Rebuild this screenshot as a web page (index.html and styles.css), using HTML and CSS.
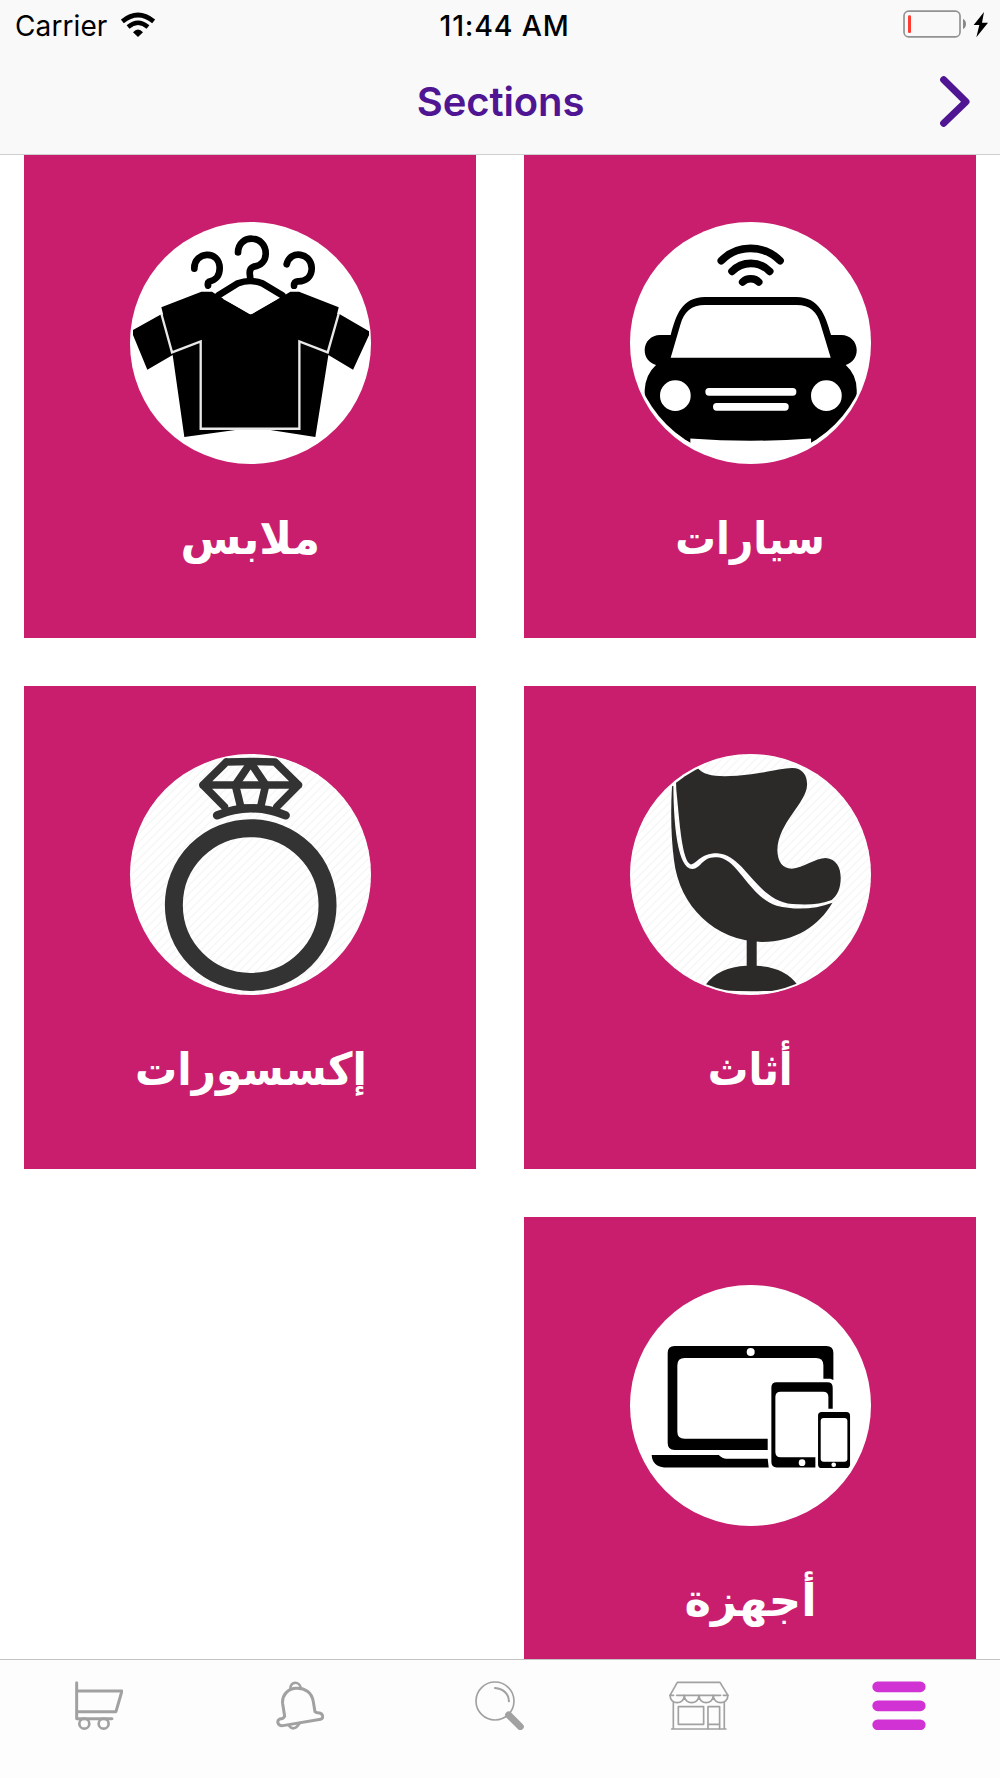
FILE: index.html
```html
<!DOCTYPE html>
<html lang="en">
<head>
    <meta charset="UTF-8">
    <meta name="viewport" content="width=device-width, initial-scale=1.0">
    <title>Sections</title>
    <link rel="stylesheet" href="styles.css">
</head>
<body>
<header class="top-bar">
    <div class="status-bar">
        <div class="status-left">
            <span class="carrier">Carrier</span>
            <svg class="wifi" viewBox="362 34 104 76">
                <path d="M366 62Q413 24 460 62" fill="none" stroke="#000" stroke-width="14"/>
                <path d="M383 79Q413 54 443 79" fill="none" stroke="#000" stroke-width="13"/>
                <path d="M398 95Q413 78 428 95L413 109Z"/>
            </svg>
        </div>
        <span class="time">11:44 AM</span>
        <div class="status-right">
            <svg class="battery" viewBox="1209 30 257 84">
                <rect x="1212" y="33.500" width="168" height="77" rx="14" fill="none" stroke="#929292" stroke-width="5"/>
                <rect x="1224" y="46" width="9" height="53" rx="4" fill="#ff3b30"/>
                <path d="M1389 57Q1398 61 1398 72Q1398 83 1389 87Z" fill="#888"/>
                <path d="M1452 36L1421 75H1438L1429 112L1464 68H1446Z"/>
            </svg>
        </div>
    </div>
    <div class="nav-bar">
        <h1>Sections</h1>
        <a href="#" class="next">
            <svg viewBox="1318 229 90 153"><path d="M1329 240L1396 306L1329 371" fill="none" stroke="#4f1592" stroke-width="21" stroke-linecap="round" stroke-linejoin="round"/></svg>
        </a>
    </div>
</header>

<main>
    <div class="sections" dir="rtl">
        <a href="#" class="card">
            <svg class="card-icon" viewBox="29 37 724 724">
                <clipPath id="car-clip"><circle cx="391" cy="392" r="357"/></clipPath>
                <g fill="none" stroke="#000" stroke-width="23" stroke-linecap="round">
                    <path d="M303 153C350 104 431 104 479 153"/>
                    <path d="M335 185C366 153 417 153 448 185"/>
                    <path d="M367 217C379 204 403 204 415 217"/>
                </g>
                <g clip-path="url(#car-clip)">
                    <path d="M151 376C168 315 183 264 254 262H528C598 264 614 315 632 376H663C689 376 709 396 709 421C709 443 696 460 676 466Q709 495 709 542V720H572V686Q391 700 210 686V720H73V542Q75 495 107 466C86 460 73 443 73 421C73 396 93 376 119 376Z"/>
                    <path d="M151 444H631L601 345C590 306 569 286 528 286H254C212 286 192 306 180 345Z" fill="#fff"/>
                    <circle cx="165" cy="558" r="46" fill="#fff"/>
                    <circle cx="618" cy="558" r="46" fill="#fff"/>
                    <rect x="255" y="535" width="273" height="23" rx="11" fill="#fff"/>
                    <rect x="278" y="580" width="227" height="23" rx="11" fill="#fff"/>
                </g>
            </svg>
            <h2><span class="label-cars">سيارات</span></h2>
        </a>

        <a href="#" class="card">
            <svg class="card-icon" viewBox="29 37 724 724">
                <!-- shirts behind -->
                <path d="M120 315L38 361V376L81 480L157 436L192 682L345 661H450L585 682L624 436L698 480L746 376V365L657 313Z"/>
                <!-- hangers -->
                <g fill="none" stroke="#000" stroke-width="20" stroke-linecap="round" stroke-linejoin="round">
                    <path d="M222 177C220 126 298 118 298 176C298 202 285 211 266 216Q261 219 263 228"/>
                    <path d="M353 128C354 72 436 74 436 131C436 153 423 168 400 171Q388 175 388 190L390 208"/>
                    <path d="M499 164C509 119 574 129 574 176C574 201 557 216 532 215Q521 216 521 228"/>
                    <path d="M294 257L352 221Q390 207 426 221L486 257"/>
                </g>
                <!-- front shirt -->
                <path d="M123 293L243 246H275L289 255L391 315L492 257L510 246H536L655 293L622 430L540 397V656H241V397L157 430Z"/>
                <path d="M123 312L155 428L241 395V657H537V395L622 428L655 312" fill="none" stroke="#e8e8e8" stroke-width="7"/>
                <path d="M307 267L355 237Q390 220 424 237L472 267L391 314Z" fill="#fff"/>
                <path d="M250 241H275M508 241H532" stroke="#fff" stroke-width="5"/>
            </svg>
            <h2><span class="label-clothes">ملابس</span></h2>
        </a>

        <a href="#" class="card">
            <svg class="card-icon" viewBox="29 41 724 724">
                <defs>
                    <pattern id="stripes" width="18" height="18" patternUnits="userSpaceOnUse" patternTransform="rotate(45)">
                        <path d="M3 0V18" stroke="#f2f2f2" stroke-width="3"/>
                    </pattern>
                    <clipPath id="chair-clip"><circle cx="391" cy="403" r="355"/></clipPath>
                </defs>
                <circle cx="391" cy="403" r="362" fill="url(#stripes)"/>
                <g fill="#2b2a28" clip-path="url(#chair-clip)">
                    <path d="M166 100L232 83C250 106 288 110 350 106C420 102 478 84 515 83C549 83 561 108 560 134C559 188 473 246 471 330C472 364 486 385 514 385C548 383 586 353 616 353C648 355 661 382 661 413C661 442 652 465 634 479C600 493 560 494 516 491C404 479 376 344 290 339C237 339 228 374 210 372C185 359 178 250 168 150Z"/>
                    <path d="M155 136H159C160 250 171 385 216 386C241 386 245 351 284 351C350 345 385 471 469 496C520 509 583 508 636 487C596 556 524 604 425 605C282 602 177 497 161 360Q148 260 155 136Z"/>
                    <path d="M379 595H409V676Q493 680 531 733L516 755H270L256 733Q294 680 379 676Z"/>
                </g>
                <path d="M310 752Q391 757 475 752" fill="none" stroke="#fff" stroke-width="4"/>
            </svg>
            <h2><span class="label-furniture">أثاث</span></h2>
        </a>

        <a href="#" class="card">
            <svg class="card-icon" viewBox="29 41 724 724">
                <circle cx="391" cy="403" r="362" fill="url(#stripes)"/>
                <g fill="none" stroke="#333">
                    <circle cx="391" cy="494" r="230.500" stroke-width="54"/>
                    <g stroke-width="23" stroke-linecap="round" stroke-linejoin="round">
                        <path d="M318 65Q391 62 464 65L534 134L470 199M312 199L248 134L318 65M248 134H534"/>
                        <path d="M391 67L345 134L362 203M391 67L436 134L420 203"/>
                        <path d="M290 225Q391 183 496 225" stroke-width="25"/>
                    </g>
                </g>
                <path d="M350 192H430L440 214H340Z" fill="#333"/>
            </svg>
            <h2><span class="label-accessories">إكسسورات</span></h2>
        </a>

        <a href="#" class="card">
            <svg class="card-icon" viewBox="29 46 724 724">
                <!-- laptop -->
                <path d="M163 229H618Q639 229 639 250V331L630 327H609V287Q609 265 587 265H193Q171 265 171 287V486Q171 507 193 507H442V541H163Q142 541 142 520V250Q142 229 163 229Z"/>
                <path d="M94 556H295Q306 567 318 567H442L445 593H132Q96 590 94 556Z"/>
                <circle cx="391" cy="247" r="12" fill="#fff"/>
                <!-- tablet -->
                <path d="M469 338H621Q637 338 637 354V417H624V382Q624 366 608 366H481Q465 366 465 382V547Q465 563 481 563H585V593H469Q453 593 453 577V354Q453 338 469 338Z"/>
                <circle cx="545" cy="579" r="10" fill="#fff"/>
                <!-- phone -->
                <rect x="593" y="427" width="96" height="168" rx="11"/>
                <rect x="601" y="445" width="80" height="131" rx="9" fill="#fff"/>
                <circle cx="640" cy="585" r="7" fill="#fff"/>
            </svg>
            <h2><span class="label-devices">أجهزة</span></h2>
        </a>
    </div>
</main>

<nav class="tab-bar">
    <a href="#">
        <svg class="tab-cart" viewBox="227 122 146 148">
            <path d="M232 127V235H338M232 152H368L350 214H232" stroke-width="9"/>
            <circle cx="255" cy="250" r="15" stroke-width="8"/>
            <circle cx="313" cy="250" r="15" stroke-width="8"/>
        </svg>
    </a>
    <a href="#">
        <svg class="tab-bell" viewBox="827 122 146 148">
            <path d="M853 228L847 190C844 163 864 146 885 144C914 141 935 157 939 184L944 214Q947 218 958 218C970 222 970 234 961 237L848 256C832 258 828 242 838 236Q850 236 853 228Z" stroke-width="9"/>
            <path d="M870 146C870 121 898 122 902 144M866 256Q880 274 896 252" stroke-width="8"/>
        </svg>
    </a>
    <a href="#">
        <svg class="tab-search" viewBox="1424 122 148 148">
            <circle cx="1484" cy="182" r="57" stroke-width="5"/>
            <path d="M1484 143Q1524 148 1526 183" stroke-width="6"/>
            <path d="M1525 224L1560 259" stroke-width="21"/>
        </svg>
    </a>
    <a href="#">
        <svg class="tab-store" viewBox="507 122 180 148">
            <g stroke-width="5">
                <path d="M510 165L532 126H660L684 165M510 165H521M530 165H662M670 165H684"/>
                <path d="M510 165C510 194 553 194 553 165C553 194 597 194 597 165C597 194 640 194 640 165C640 194 684 194 684 165"/>
                <path d="M520 187V265M673 187V265M515 266H678"/>
                <path d="M535 199H611V252H535ZM624 265V199H659V265M624 252H659"/>
            </g>
        </svg>
    </a>
    <a href="#" class="active">
        <svg class="tab-menu" viewBox="1115 122 162 148">
            <path d="M1132 139.500H1260M1132 196.500H1260M1132 253.500H1260" stroke-width="32"/>
        </svg>
    </a>
</nav>
</body>
</html>
```
FILE: styles.css
```css
* {
    box-sizing: border-box;
}
body {
    margin: 0;
    height: 100vh;
    display: flex;
    flex-direction: column;
    overflow: hidden;
    background: #fff;
    font-family: Inter, "Liberation Sans", sans-serif;
}
a {
    color: inherit;
    text-decoration: none;
}
svg {
    display: block;
}

/* status bar and title */
.top-bar {
    height: 155px;
    flex: none;
    background: #f9f9f9;
    border-bottom: 1px solid #cfcfcf;
}
.status-bar {
    display: grid;
    grid-template-columns: 1fr auto 1fr;
    align-items: center;
    height: 51px;
    padding: 0 11px 0 15px;
    font-size: 28px;
    color: #000;
}
.status-left {
    display: flex;
    align-items: center;
    gap: 14px;
}
.carrier {
    letter-spacing: 0.1px;
}
.wifi {
    width: 34.7px;
    height: 25.3px;
    margin-top: -2px;
}
.time {
    font-weight: 500;
    font-size: 28.5px;
    letter-spacing: 0.8px;
    margin-left: 5px;
}
.status-right {
    display: flex;
    justify-content: flex-end;
}
.battery {
    width: 85.7px;
    height: 28px;
    margin-top: -3px;
}
.nav-bar {
    display: grid;
    grid-template-columns: 1fr auto 1fr;
    align-items: center;
    height: 101px;
    padding: 0 30px 0 31px;
}
.nav-bar h1 {
    grid-column: 2;
    margin: 0;
    font-size: 40px;
    font-weight: 600;
    letter-spacing: -0.1px;
    color: #4f1592;
}
.next {
    justify-self: end;
}
.next svg {
    width: 30px;
    height: 51px;
}

/* grid of sections */
main {
    flex: 1;
    min-height: 0;
    overflow: hidden;
}
.sections {
    display: grid;
    grid-template-columns: 1fr 1fr;
    grid-auto-rows: 483.4px;
    gap: 48px;
    padding: 0 24px;
    margin-top: -0.7px;
}
.card {
    display: flex;
    flex-direction: column;
    align-items: center;
    padding: 68px 0 0 1px;
    background: #c91e6e;
}
.card-icon {
    width: 241.4px;
    height: 241.4px;
    flex: none;
    border-radius: 50%;
    background: #fff;
}
.card h2 {
    margin: 45px 0 0;
    color: #fff;
    font-family: "DejaVu Sans", sans-serif;
    font-size: 45px;
    line-height: 60px;
    font-weight: bold;
    white-space: nowrap;
}
.card h2 span {
    display: inline-block;
}
/* condensed labels */
.label-cars, .label-furniture {
    transform: scaleX(0.9);
}
.label-clothes {
    transform: scaleX(0.98);
}
.label-accessories {
    transform: scaleX(0.935);
}

/* bottom tabs */
.tab-bar {
    display: grid;
    grid-template-columns: repeat(5, 1fr);
    flex: none;
    height: 119px;
    padding-top: 20.5px;
    background: #fdfdfd;
    border-top: 1px solid #c4c4c4;
    color: #a1a1a1;
}
.tab-bar a {
    display: flex;
    justify-content: center;
    height: 49.3px;
}
.tab-bar svg {
    height: 49.3px;
    fill: none;
    stroke: currentColor;
    stroke-linecap: round;
    stroke-linejoin: round;
}
.tab-bar .active {
    color: #d032d4;
}
.tab-cart, .tab-menu, .tab-store {
    margin-right: 2px;
}
```
